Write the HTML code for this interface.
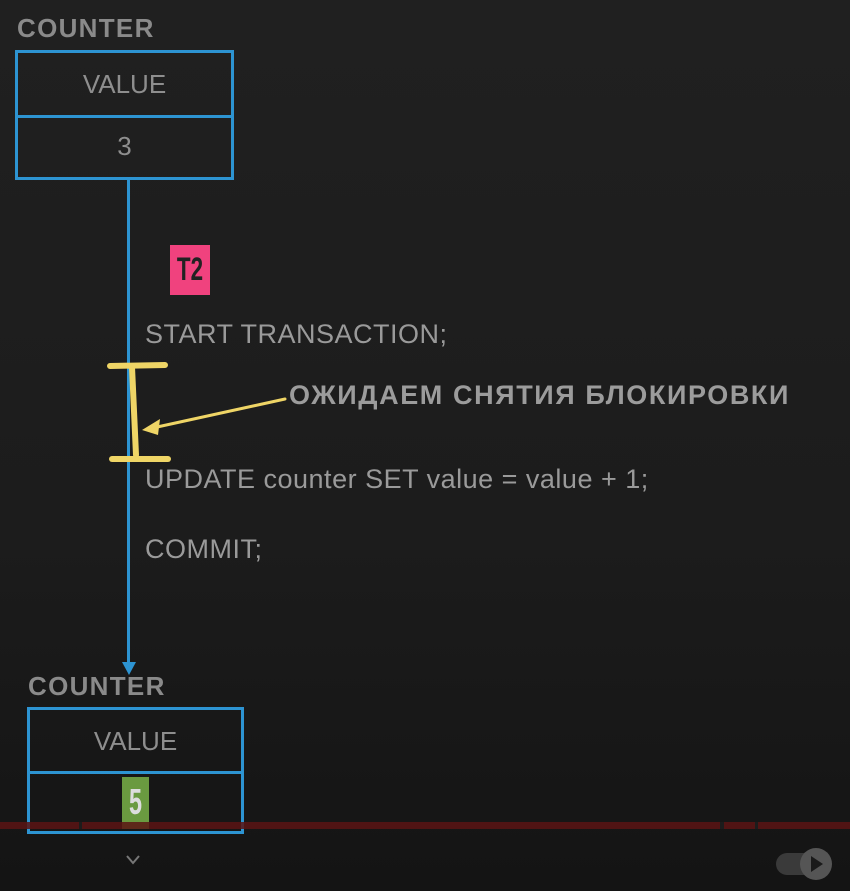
<!DOCTYPE html>
<html><head><meta charset="utf-8"><style>
body{margin:0;width:850px;height:891px;overflow:hidden;background:linear-gradient(#202020,#1c1c1c 60%,#141414);font-family:"Liberation Sans",sans-serif;position:relative}
.a{position:absolute}
.t{color:#9a9a9a;font-size:27px;letter-spacing:0.5px}
.h{color:#8a8a8a;font-weight:bold;font-size:26px;letter-spacing:1.3px}
.box{position:absolute;border:3px solid #2d94d2;box-sizing:border-box}
.cell{position:absolute;left:0;right:0;text-align:center;color:#8e8e8e;font-size:26px}
</style></head><body>
<div class="a h" style="left:17px;top:13px">COUNTER</div>
<div class="box" style="left:15px;top:50px;width:219px;height:130px">
 <div class="a" style="left:0;right:0;top:62px;height:3px;background:#2d94d2"></div>
 <div class="cell" style="top:16px">VALUE</div>
 <div class="cell" style="top:78px">3</div>
</div>
<div class="a" style="left:127px;top:179px;width:3px;height:485px;background:#2d94d2"></div>
<svg class="a" style="left:120px;top:660px" width="18" height="16"><path d="M2 2 L16 2 L9 15Z" fill="#2d94d2"/></svg>
<div class="a" style="left:170px;top:245px;width:40px;height:50px;background:#f0427e"></div>
<div class="a" style="left:170px;top:245px;width:40px;height:50px;color:#222;font-weight:bold;font-size:32px;text-align:center;line-height:48px;transform:scaleX(0.7)">T2</div>
<div class="a t" style="left:145px;top:319px">START TRANSACTION;</div>
<div class="a t" style="left:145px;top:464px">UPDATE counter SET value = value + 1;</div>
<div class="a t" style="left:145px;top:534px">COMMIT;</div>
<div class="a h" style="left:289px;top:380px;font-size:27px;letter-spacing:1.6px;color:#9c9c9c">ОЖИДАЕМ СНЯТИЯ БЛОКИРОВКИ</div>
<svg class="a" style="left:100px;top:355px" width="200" height="115">
<g stroke="#efd566" stroke-linecap="round" fill="none">
<path d="M10 11 L65 10" stroke-width="6"/>
<path d="M32 12 L36 100" stroke-width="6"/>
<path d="M12 104 L68 104" stroke-width="6"/>
<path d="M185 44 L48 74" stroke-width="3"/>
</g>
<path d="M42 75 L60 64 L58 80Z" fill="#efd566"/>
</svg>
<div class="a h" style="left:28px;top:671px">COUNTER</div>
<div class="box" style="left:27px;top:707px;width:217px;height:127px">
 <div class="a" style="left:0;right:0;top:61px;height:3px;background:#2d94d2"></div>
 <div class="cell" style="top:16px">VALUE</div>
 <div class="a" style="left:92px;top:67px;width:27px;height:52px;background:#6a9a40"></div>
 <div class="a" style="left:92px;top:67px;width:27px;height:52px;color:#ddd;font-weight:bold;font-size:36px;text-align:center;line-height:50px;transform:scaleX(0.65)">5</div>
</div>
<div class="a" style="left:0;top:822px;width:850px;height:7px;background:rgba(90,20,20,0.85)"></div>
<div class="a" style="left:79px;top:822px;width:3px;height:7px;background:#1c1c1c"></div>
<div class="a" style="left:720px;top:822px;width:4px;height:7px;background:#1c1c1c"></div>
<div class="a" style="left:755px;top:822px;width:3px;height:7px;background:#1c1c1c"></div>
<svg class="a" style="left:125px;top:854px" width="18" height="12"><path d="M2 2 L8 9 L14 2" stroke="#777" stroke-width="2" fill="none"/></svg>
<div class="a" style="left:776px;top:853px;width:40px;height:22px;border-radius:11px;background:#3a3a3a"></div>
<div class="a" style="left:800px;top:848px;width:32px;height:32px;border-radius:50%;background:#555"></div>
<svg class="a" style="left:800px;top:848px" width="32" height="32"><path d="M11 8 L23 16 L11 24Z" fill="#1a1a1a"/></svg>
</body></html>
